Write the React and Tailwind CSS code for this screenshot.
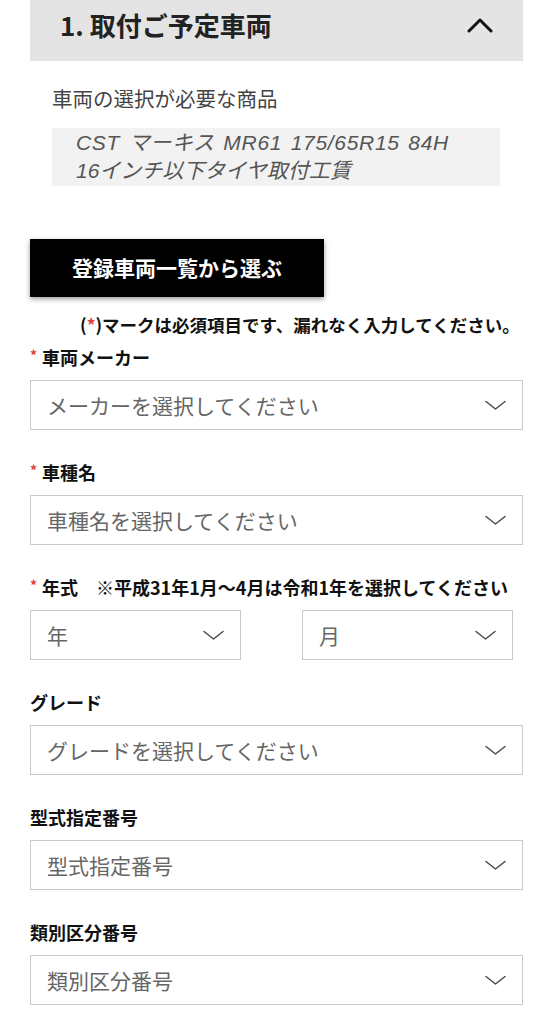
import React from 'react';

const ChevronDown = () => (
  <svg width="21" height="11" viewBox="0 0 21 11" fill="none" className="shrink-0">
    <path d="M1 1.5 L10.5 9 L20 1.5" stroke="#4a4a4a" strokeWidth="1.5" strokeLinecap="round" strokeLinejoin="round" />
  </svg>
);

const ChevronUp = () => (
  <svg width="26" height="16" viewBox="0 0 26 16" fill="none">
    <path d="M2 14 L13 3 L24 14" stroke="#111" strokeWidth="3" strokeLinecap="round" strokeLinejoin="round" />
  </svg>
);

function Label({ text, required }) {
  return (
    <div className="flex items-start h-[21px] mb-3 text-[18px] leading-[21px] font-bold text-[#111]">
      {required ? (
        <span className="text-[#e0413a] text-[14px] leading-none mt-[1px] w-[12px] shrink-0">*</span>
      ) : null}
      <span className="whitespace-nowrap">{text}</span>
    </div>
  );
}

function Select({ placeholder, className = 'w-full' }) {
  return (
    <div className={`${className} h-[50px] border border-[#c9c9c9] bg-white flex items-center justify-between pl-4 pr-4`}>
      <span className="text-[21px] leading-[24px] text-[#666]">{placeholder}</span>
      <ChevronDown />
    </div>
  );
}

export default function App() {
  // 選択項目
  const fields = [
    { key: 'model', label: '車種名', required: true, placeholder: '車種名を選択してください' },
  ];
  const optional = [
    { key: 'grade', label: 'グレード', placeholder: 'グレードを選択してください' },
    { key: 'katashiki', label: '型式指定番号', placeholder: '型式指定番号' },
    { key: 'ruibetsu', label: '類別区分番号', placeholder: '類別区分番号' },
  ];

  return (
    <div className="w-[553px] min-h-[1024px] bg-white font-['Noto_Sans_CJK_JP',sans-serif] px-[30px]">
      {/* Header */}
      <div className="h-[61px] bg-[#e4e4e4] flex items-center justify-between pl-[30px] pr-[30px] pb-[11px]">
        <h2 className="text-[26px] leading-[30px] font-bold text-[#222]">
          1.<span className="ml-[6px]">取付ご予定車両</span>
        </h2>
        <ChevronUp />
      </div>

      {/* 商品 */}
      <div className="pl-[22px] pr-[23px]">
        <p className="mt-[23px] text-[20.5px] leading-[28px] text-[#444]">車両の選択が必要な商品</p>
        <div className="mt-4 bg-[#f2f2f2] py-[1px] pl-[24px] font-['Liberation_Sans','Noto_Sans_CJK_JP',sans-serif] italic text-[21px] leading-[28px] text-[#555] whitespace-nowrap">
          <p className="[word-spacing:2px] tracking-[0.7px]">CST マーキス MR61 175/65R15 84H</p>
          <p>16インチ以下タイヤ取付工賃</p>
        </div>
      </div>

      <button className="mt-[53px] w-[294px] h-[58px] bg-black text-white text-[21px] font-bold shadow-[0_2px_5px_rgba(0,0,0,0.4)]">
        登録車両一覧から選ぶ
      </button>

      <p className="mt-4 pl-[50px] text-[17.5px] leading-[24px] font-bold text-[#111] whitespace-nowrap">
        (<span className="text-[#e0413a]">*</span>)マークは必須項目です、漏れなく入力してください。
      </p>

      <div className="mt-[10px]">
        <Label text="車両メーカー" required />
        <Select placeholder="メーカーを選択してください" />
      </div>

      {fields.map((f) => (
        <div key={f.key} className="mt-8">
          <Label text={f.label} required={f.required} />
          <Select placeholder={f.placeholder} />
        </div>
      ))}

      <div className="mt-8">
        <Label text="年式　※平成31年1月～4月は令和1年を選択してください" required />
        <div className="flex gap-[61px]">
          <Select placeholder="年" className="w-[211px]" />
          <Select placeholder="月" className="w-[211px]" />
        </div>
      </div>

      {optional.map((f) => (
        <div key={f.key} className="mt-8">
          <Label text={f.label} />
          <Select placeholder={f.placeholder} />
        </div>
      ))}
    </div>
  );
}
